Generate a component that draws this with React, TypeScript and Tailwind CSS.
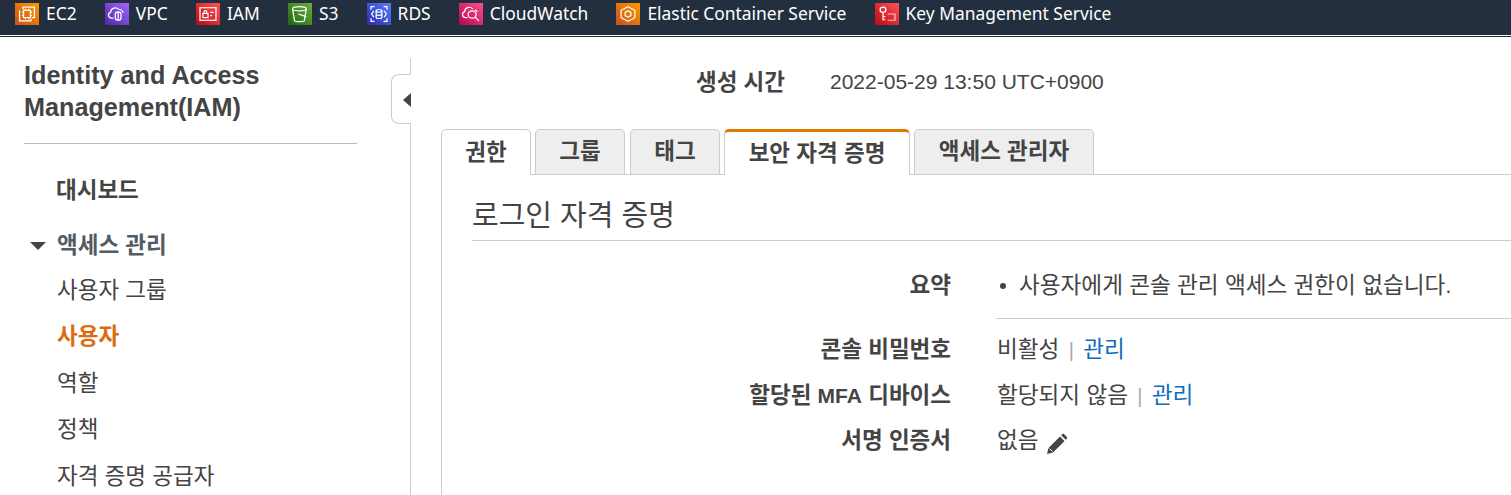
import React from "react";

const CJK = "font-['Liberation_Sans','Noto_Sans_CJK_KR',sans-serif]";

function Box({ from, to, children }: { from: string; to: string; children: React.ReactNode }) {
  return (
    <svg width="24" height="22" viewBox="0 0 21 21" preserveAspectRatio="none" fill="none" stroke="#fff" strokeWidth="1.100" className="shrink-0">
      <defs>
        <linearGradient id={from + to} x1="0" y1="1" x2="1" y2="0">
          <stop offset="0" stopColor={from} />
          <stop offset="1" stopColor={to} />
        </linearGradient>
      </defs>
      <rect width="21" height="21" fill={`url(#${from + to})`} stroke="none" />
      {children}
    </svg>
  );
}

const services: { name: string; from: string; to: string; icon: React.ReactNode }[] = [
  {
    name: "EC2", from: "#c8511b", to: "#ff9900",
    icon: (<><path d="M7 6V4h10v10h-2M4 7v10h10v-2" /><rect x="7.500" y="7" width="6" height="7" /><path d="M6 9h1.500M6 12h1.500M13.500 9H15M13.500 12H15M9 5.500V7M12 5.500V7M9 14v1.500M12 14v1.500" /></>),
  },
  {
    name: "VPC", from: "#4d27a8", to: "#a166ff",
    icon: (<><path d="M7.500 14.500H6a3 3 0 0 1-1-5.800A4 4 0 0 1 12 6" /><path d="M12 6c2 .2 3.500 1.500 3.800 3.500" /><rect x="9" y="8.500" width="5" height="8" rx="2.500" /><path d="M11.500 8.500v8" /></>),
  },
  {
    name: "IAM", from: "#bd0816", to: "#ff5252",
    icon: (<><rect x="3.500" y="4.500" width="14" height="12" /><rect x="6" y="10" width="4.500" height="4" /><path d="M7 10V8.500a1.200 1.200 0 0 1 2.400 0V10M12.500 9h3M12.500 12h1.500" /></>),
  },
  {
    name: "S3", from: "#1b660f", to: "#6cae3e",
    icon: (<><ellipse cx="10" cy="5.500" rx="6" ry="2" /><path d="M4 5.500l1.700 11.500c1 1 7.600 1 8.600 0L16 5.500M9 10.500l7 2.500" /></>),
  },
  {
    name: "RDS", from: "#2e27ad", to: "#527fff",
    icon: (<><ellipse cx="10.500" cy="7.500" rx="2.500" ry="1.300" /><path d="M8 7.500v6c0 1.700 5 1.700 5 0v-6M8 10.500c0 1.700 5 1.700 5 0M3.500 6.500V3.500H6.500M14.500 3.500h3v3M3.500 14.500v3h3M14.500 17.500h3v-3M6 7.500l-2 3 2 3M15 7.500l2 3-2 3" /></>),
  },
  {
    name: "CloudWatch", from: "#b0084d", to: "#ff4f8b",
    icon: (<><path d="M7.500 14H6a3 3 0 0 1-1-5.800A4 4 0 0 1 12 5.500" /><path d="M14 6.500c1 .5 1.600 1 2 2" /><circle cx="11.500" cy="11" r="3.500" /><path d="M14 13.500l3.500 3.500" /></>),
  },
  {
    name: "Elastic Container Service", from: "#c8511b", to: "#ff9900",
    icon: (<><path d="M10.500 3.500l6 3.500v7l-6 3.500-6-3.500V7z" /><path d="M10.500 7.500l2.500 1.500v3l-2.500 1.500-2.500-1.500V9z" /></>),
  },
  {
    name: "Key Management Service", from: "#bd0816", to: "#ff5252",
    icon: (<><circle cx="7" cy="6.500" r="2.500" /><path d="M7 9V16.500M7 13h2M7 16h2" /><path d="M11 10.500h6.500v6H11" strokeOpacity="0.7" /></>),
  },
];

function Row({ label, children, className = "" }: { label: React.ReactNode; children: React.ReactNode; className?: string }) {
  return (
    <div className={`flex items-start ${className}`}>
      <div className="w-[479px] shrink-0 text-right text-[22.500px] font-bold leading-[28px] text-[#444]">{label}</div>
      <div className="whitespace-nowrap pl-[46px] text-[22.600px] leading-[28px] text-[#444]">{children}</div>
    </div>
  );
}

function Tab({ label, selected, first, width }: { label: string; selected?: boolean; first?: boolean; width: string }) {
  return (
    <div
      className={`relative flex items-center justify-center rounded-t-[5px] border border-b-0 border-[#ccc] text-[22.500px] font-bold text-[#444] ${width} ${
        selected
          ? "z-10 mb-[-1px] h-[46px] border-t-[3px] border-t-[#e07b00] bg-white"
          : first
            ? "z-10 mb-[-1px] h-[46px] bg-white"
            : "h-[45px] bg-[#eee]"
      }`}
    >
      {label}
    </div>
  );
}

export default function App() {
  return (
    <div className={`h-[495px] w-[1511px] overflow-hidden bg-white ${CJK}`}>
      <header className="flex h-[35px] items-start gap-[28.200px] bg-[#232f3e] pl-[15px] pt-[3px] font-['Noto_Sans','Noto_Sans_CJK_KR',sans-serif] text-[17.400px] text-white">
        {services.map((s) => (
          <div key={s.name} className="flex h-[22px] items-center gap-[7px]">
            <Box from={s.from} to={s.to}>{s.icon}</Box>
            <span className="whitespace-nowrap pb-[2px] leading-[22px]">{s.name}</span>
          </div>
        ))}
      </header>
      <div className="h-[1px] bg-white" />
      <div className="h-[1px] bg-[#232f3e]" />
      <div className="flex h-[458px]">
        <aside className="relative w-[411px] shrink-0 border-r border-[#ccc] pl-[24px]">
          <div className="absolute right-[-1px] top-0 h-[21px] w-[1px] bg-white" />
          <h1 className="w-[333px] border-b border-[#bbb] pb-[20px] pt-[22px] text-[25.200px] font-bold leading-[32px] text-[#444]">
            Identity and Access
            <br />
            Management(IAM)
          </h1>
          <div className="pl-[32px] pt-[32px] text-[22.500px] font-bold leading-[30px] text-[#444]">대시보드</div>
          <div className="mt-[25px] flex items-center text-[22.500px] font-bold leading-[30px] text-[#545b64]">
            <span className="ml-[6px] mr-[11px] h-0 w-0 border-x-[8px] border-t-[8px] border-x-transparent border-t-[#444]" />
            액세스 관리
          </div>
          <nav className="mt-[14.700px] flex flex-col gap-[16.600px] pl-[33px] text-[22.500px] leading-[30px] text-[#444]">
            <div>사용자 그룹</div>
            <div className="font-bold text-[#dd6b10]">사용자</div>
            <div>역할</div>
            <div>정책</div>
            <div>자격 증명 공급자</div>
          </nav>
          <div className="absolute right-[-1px] top-[37px] flex h-[50px] w-[20px] items-center justify-center rounded-l-[8px] border border-r-0 border-[#ccc] bg-white">
            <span className="ml-[10px] mt-[2px] h-0 w-0 border-y-[7px] border-r-[8px] border-y-transparent border-r-[#444]" />
          </div>
        </aside>
        <main className="min-w-0 flex-1 pl-[30px]">
          <div className="flex h-[92px] items-start pt-[32px]">
            <div className="w-[344px] text-right text-[22.500px] font-bold leading-[28px] text-[#444]">생성 시간</div>
            <div className="-mt-[1px] pl-[45px] text-[21px] leading-[28px] text-[#444]">2022-05-29 13:50 UTC+0900</div>
          </div>
          <div className="relative flex items-end gap-[4px]">
            <Tab label="권한" first width="w-[90px]" />
            <Tab label="그룹" width="w-[90px]" />
            <div className="ml-[1px] flex"><Tab label="태그" width="w-[90px]" /></div>
            <Tab label="보안 자격 증명" selected width="w-[186px]" />
            <Tab label="액세스 관리자" width="w-[180px]" />
          </div>
          <div className="h-[321px] border-l border-t border-[#ccc] pl-[30px]">
            <h2 className="border-b border-[#ccc] pb-[7px] pt-[24px] text-[29px] leading-[34px] text-[#444]">로그인 자격 증명</h2>
            <div className="pt-[31px]">
              <Row label="요약">
                <div className="flex items-center">
                  <span className="ml-[3px] mr-[13px] h-[6px] w-[6px] rounded-full bg-[#444]" />
                  사용자에게 콘솔 관리 액세스 권한이 없습니다.
                </div>
              </Row>
              <div className="ml-[524px] mt-[18px] h-[1px] bg-[#ccc]" />
              <Row label="콘솔 비밀번호" className="mt-[17px]">
                비활성 <span className="mx-[3px] text-[20px] text-[#aaa]">|</span> <span className="text-[#0f6cbd]">관리</span>
              </Row>
              <Row label={<>할당된 <span className="text-[21px]">MFA</span> 디바이스</>} className="mt-[18px]">
                할당되지 않음 <span className="mx-[3px] text-[20px] text-[#aaa]">|</span> <span className="text-[#0f6cbd]">관리</span>
              </Row>
              <Row label="서명 인증서" className="mt-[17px]">
                <span className="flex items-center gap-[8px]">
                  없음
                  <svg width="22" height="22" viewBox="0 0 22 22" fill="#444" className="ml-[-1px] mt-[6px]">
                    <path d="M1 21l1.500-6L14 3.500l4.500 4.500L7 19.500z M15.200 2.300l1-1c.6-.6 1.400-.6 2 0l2.500 2.500c.6.6.6 1.400 0 2l-1 1z" />
                    <path d="M3.500 15.500l3 3" stroke="#fff" strokeWidth="1" />
                  </svg>
                </span>
              </Row>
            </div>
          </div>
        </main>
      </div>
    </div>
  );
}
